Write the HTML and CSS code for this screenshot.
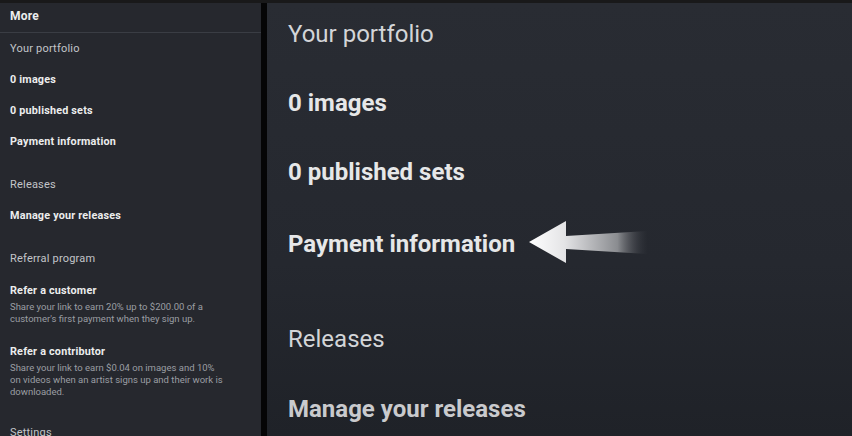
FILE: index.html
```html
<!DOCTYPE html>
<html lang="en">
<head>
    <meta charset="UTF-8">
    <title>More - Your portfolio</title>
    <link rel="stylesheet" href="styles.css">
</head>
<body>
    <div class="topbar"></div>
    <div class="page">
        <!-- Sidebar menu -->
        <div class="sidebar">
            <div class="sidebar-head">More</div>
            <div class="row label">Your portfolio</div>
            <div class="row link">0 images</div>
            <div class="row link">0 published sets</div>
            <div class="row link">Payment information</div>

            <div class="row label gap">Releases</div>
            <div class="row link">Manage your releases</div>

            <div class="row label gap">Referral program</div>
            <div class="refer">
                <div class="refer-title">Refer a customer</div>
                <div class="refer-desc">Share your link to earn 20% up to $200.00 of a<br>customer's first payment when they sign up.</div>
            </div>
            <div class="refer second">
                <div class="refer-title">Refer a contributor</div>
                <div class="refer-desc">Share your link to earn $0.04 on images and 10%<br>on videos when an artist signs up and their work is<br>downloaded.</div>
            </div>
            <div class="row label settings">Settings</div>
        </div>

        <div class="divider"></div>

        <!-- Zoomed view -->
        <div class="main">
            <div class="big-label">Your portfolio</div>
            <div class="big-link">0 images</div>
            <div class="big-link">0 published sets</div>
            <div class="big-link with-arrow">
                Payment information
                <svg class="arrow" width="122" height="46" viewBox="0 0 122 46">
                    <defs>
                        <linearGradient id="fade" x1="0" y1="0" x2="1" y2="0">
                            <stop offset="0" stop-color="#ffffff"/>
                            <stop offset="0.3" stop-color="#e4e4e6"/>
                            <stop offset="0.75" stop-color="#8a8c90"/>
                            <stop offset="1" stop-color="#2a2d34" stop-opacity="0.2"/>
                        </linearGradient>
                    </defs>
                    <path d="M0 21 L37 0 L37 15 L118 10 L118 33 L37 28 L37 42 Z" fill="url(#fade)"/>
                </svg>
            </div>
            <div class="big-label releases">Releases</div>
            <div class="big-link dim">Manage your releases</div>
        </div>
    </div>
</body>
</html>
```

FILE: styles.css
```css
body {
    margin: 0;
    font-family: Roboto, "Open Sans", sans-serif;
    background-color: #1b1c1f;
    width: 852px;
    height: 436px;
    overflow: hidden;
}

.topbar {
    height: 3px;
    background-color: #19191a;
}

.page {
    display: flex;
    height: 433px;
}

.sidebar {
    width: 261px;
    background-color: #26282e;
    box-sizing: border-box;
    display: flex;
    flex-direction: column;
    overflow: hidden;
}

.sidebar-head {
    height: 29px;
    line-height: 26px;
    padding-left: 10px;
    font-size: 12px;
    font-weight: bold;
    color: #eceded;
    letter-spacing: 0.2px;
    border-bottom: 1px solid #3a3d44;
    flex-shrink: 0;
}

.row {
    height: 31px;
    line-height: 31px;
    padding-left: 10px;
    font-size: 11px;
    letter-spacing: 0.2px;
    flex-shrink: 0;
}

.row.label {
    color: #c3c5c9;
}

.row.link {
    color: #eceded;
    font-weight: bold;
    font-size: 10.8px;
}

.row.gap {
    margin-top: 12px;
}

.refer {
    padding: 9px 10px 0 10px;
    flex-shrink: 0;
}

.refer.second {
    padding-top: 18px;
}

.refer-title {
    font-size: 10.8px;
    font-weight: bold;
    color: #eceded;
    letter-spacing: 0.2px;
    line-height: 16px;
}

.refer-desc {
    margin-top: 2px;
    font-size: 9.5px;
    line-height: 12.3px;
    color: #9b9ea3;
}

.row.settings {
    margin-top: 19px;
}

.divider {
    width: 6px;
    background-color: #050506;
}

.main {
    flex: 1;
    padding: 0 0 0 21px;
    background: linear-gradient(180deg, #292c33 0%, #25282f 60%, #1f2228 100%);
    display: flex;
    flex-direction: column;
}

.big-label {
    font-size: 24px;
    color: #d3d5d8;
    height: 66px;
    line-height: 62px;
    flex-shrink: 0;
}

.big-link {
    font-size: 24px;
    font-weight: bold;
    color: #e6e7e8;
    height: 69px;
    line-height: 69px;
    flex-shrink: 0;
}

.with-arrow {
    display: flex;
    align-items: center;
    height: 74px;
    line-height: normal;
}

.arrow {
    margin-left: 14px;
}

.big-label.releases {
    margin-top: 22px;
    height: 72px;
    line-height: 72px;
}

.big-link.dim {
    color: #c9cacd;
}
```
